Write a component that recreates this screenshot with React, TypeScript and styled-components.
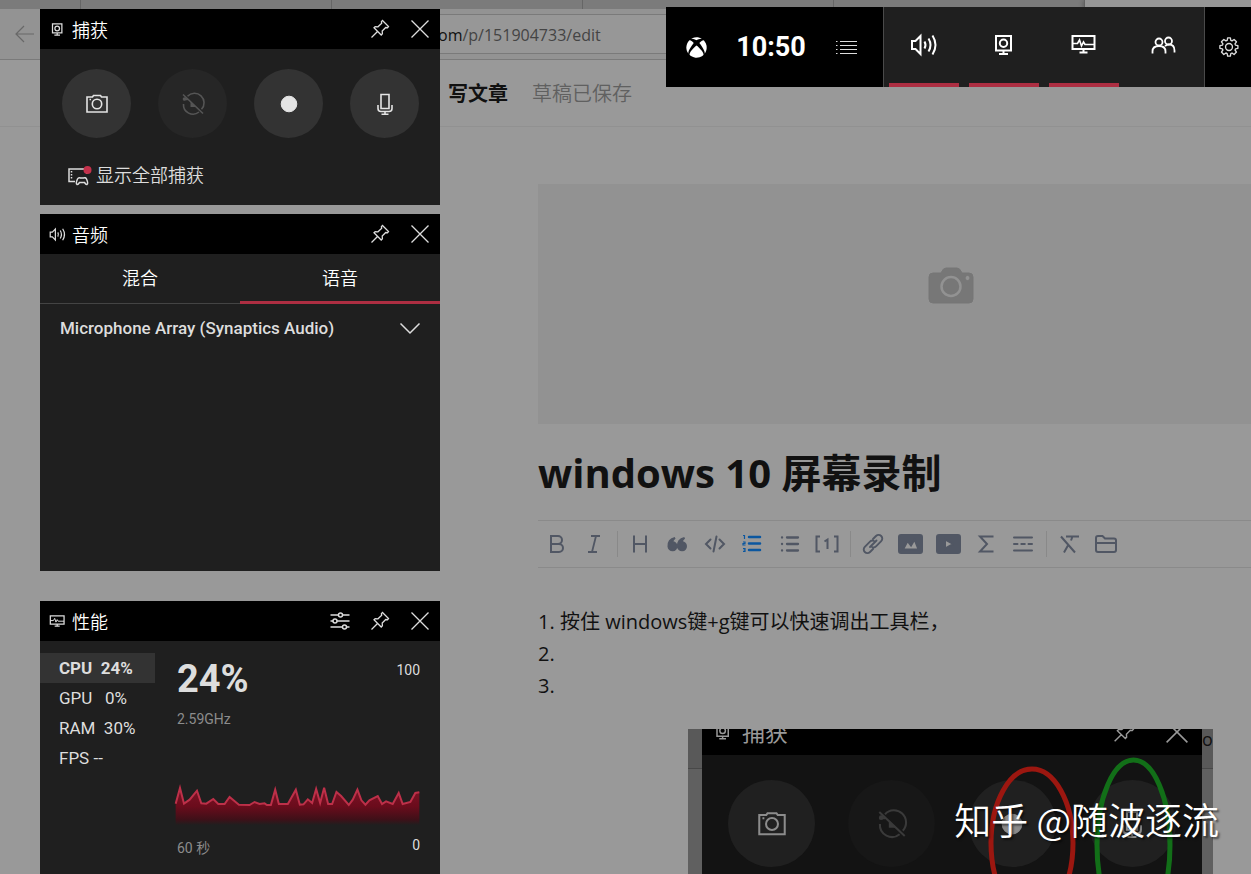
import React from "react";
import styled, { createGlobalStyle, css } from "styled-components";
import { FaXbox } from "react-icons/fa";

const GlobalStyle = createGlobalStyle`
  *, *::before, *::after { box-sizing: border-box; }
  body {
    margin: 0;
    background: #999;
    font-family: "Open Sans", "Noto Sans CJK SC", sans-serif;
  }
  button, input, select {
    margin: 0;
    padding: 0;
    border: 0;
    background: none;
    color: inherit;
    font: inherit;
  }
`;

const din = css`
  font-family: Roboto, "Noto Sans CJK SC", sans-serif;
`;

/* ---------- icons ---------- */

const Svg = styled.svg`
  display: block;
  flex: none;
  fill: none;
  stroke: currentColor;
  overflow: visible;
`;

type IconProps = { size?: number };

const CaptureIcon = ({ size = 24 }: IconProps) => (
  <Svg width={size} height={size} viewBox="0 0 24 24" strokeWidth="2">
    <path d="M4 3h15v14.500H4zM11.500 17.500v3M7 21h9" />
    <circle cx="11.500" cy="10.300" r="3.700" />
  </Svg>
);

const SpeakerIcon = ({ size = 28 }: IconProps) => (
  <Svg width={size} height={size} viewBox="0 0 28 28" strokeWidth="2">
    <path d="M2 10h3.500L10.500 5v18L5.500 18H2z" />
    <path d="M14.500 10.500q2 3.500 0 7M18.500 7.500q4 6.500 0 13M22.500 4.500q6 9.500 0 19" />
  </Svg>
);

const MonitorIcon = ({ size = 24 }: IconProps) => (
  <Svg width={size} height={size} viewBox="0 0 24 24" strokeWidth="2">
    <path d="M.5 3h22v13H.5zM11.500 16v3.500M7.500 19.500h8" />
    <path d="M.5 10.500h5l2-3.500 2 6 2-4 1.500 2.500h9.500" strokeWidth="1.600" />
  </Svg>
);

const PeopleIcon = () => (
  <Svg width="24" height="24" viewBox="0 0 24 24" strokeWidth="1.800">
    <circle cx="7" cy="9" r="3.500" />
    <circle cx="16.500" cy="8" r="3.500" />
    <path d="M.5 20.500v-2Q.5 13 7 13t6.500 5.500v2M13 13q2-1.500 4-1.500 5.500 0 5.500 6v2" />
  </Svg>
);

const MenuIcon = () => (
  <Svg width="22" height="16" viewBox="0 0 22 16" strokeWidth="1.200">
    <path d="M5 2.500h17M5 6.500h17M5 10.500h17M5 14.500h17" />
    <path d="M1 2.500h1.500M1 6.500h1.500M1 10.500h1.500M1 14.500h1.500" />
  </Svg>
);

const GearIcon = () => (
  <Svg width="20" height="20" viewBox="0 0 22 22" strokeWidth="1.500" strokeLinejoin="round">
    <circle cx="11" cy="11" r="3.800" />
    <path d="M9.500 1h3l.5 2.700 1.300.6 2.300-1.600 2.600 2.600-1.600 2.300.6 1.400 2.600.5v3l-2.600.5-.6 1.300 1.600 2.300-2.600 2.600-2.300-1.600-1.300.6-.5 2.800h-3L9 18.200l-1.400-.6-2.300 1.600-2.600-2.600 1.600-2.300-.6-1.300-2.700-.5v-3L3.700 9l.6-1.400-1.600-2.300 2.600-2.600 2.300 1.600L9 3.700z" />
  </Svg>
);

const PinIcon = ({ size = 20 }: IconProps) => (
  <Svg width={size} height={size} viewBox="0 0 20 20" strokeWidth="1.300">
    <path d="M12.500 1.500l6 6-1 1.200-1.800-.2-3.500 3.500.2 2.800-1.200 1.200L4 8.800l1.200-1.200 2.800.2 3.700-3.500-.3-1.700zM7.500 12.500L1.500 18.500" />
  </Svg>
);

const CloseIcon = ({ size = 18 }: IconProps) => (
  <Svg width={size} height={size} viewBox="0 0 18 18" strokeWidth="1.300">
    <path d="M.5.5l17 17M17.500.5l-17 17" />
  </Svg>
);

const SlidersIcon = () => (
  <Svg width="20" height="18" viewBox="0 0 20 18" strokeWidth="1.500">
    <path d="M.5 3h8M12.500 3h7M.5 9h2.500M7 9h12.500M.5 15h12M16.500 15h3" />
    <circle cx="10.500" cy="3" r="2" />
    <circle cx="5" cy="9" r="2" />
    <circle cx="14.500" cy="15" r="2" />
  </Svg>
);

const CameraIcon = ({ size = 22 }: IconProps) => (
  <Svg width={size} height={size} viewBox="0 0 22 22" strokeWidth="1.600">
    <path d="M1 4h5.500l1-1.500h7l1 1.500H21v15H1z" />
    <circle cx="11" cy="11" r="4.700" />
    <path d="M3.500 6.500h1.500" />
  </Svg>
);

const RewindOffIcon = ({ size = 22 }: IconProps) => (
  <Svg width={size} height={size} viewBox="0 0 22 22" strokeWidth="1.600">
    <path d="M5.500 3.300a9.500 9.500 0 0 1 14 13M17 19A9.500 9.500 0 0 1 1.500 11M1 1.500l20 19M1 6.500h4.500" />
    <path d="M8.500 9v5h5.500z" fill="currentColor" stroke="none" />
    <circle cx="2.500" cy="6" r="1.800" fill="currentColor" stroke="none" />
  </Svg>
);

const RecordIcon = ({ size = 16 }: IconProps) => (
  <Svg width={size} height={size} viewBox="0 0 16 16" stroke="none">
    <circle cx="8" cy="8" r="7.800" fill="currentColor" />
  </Svg>
);

const MicIcon = ({ size = 22 }: IconProps) => (
  <Svg width={size} height={size} viewBox="0 0 22 22" strokeWidth="1.600">
    <path d="M7 1.500h8v14H7zM4 12v3.500q0 3 3 3h8q3 0 3-3V12M11 18.500v2.500M7.500 21.200h7" />
  </Svg>
);

const GalleryIcon = () => (
  <Svg width="24" height="20" viewBox="0 0 24 20" strokeWidth="1.500">
    <path d="M7 15.500H1V3h18v5" />
    <path d="M3.500 5v9" strokeDasharray="1.500 1.500" />
    <path d="M9 18.500q-1.500-1 .5-5.500 1-2 3-1h3q2-1 3 1 2 4.500.5 5.500-1 .5-2.500-2h-5q-1.500 2.500-2.500 2z" />
    <circle cx="19.500" cy="4" r="4" fill="#c4314b" stroke="none" />
  </Svg>
);

/* ---------- browser page ---------- */

const Desktop = styled.div`
  position: relative;
  height: 100vh;
  overflow: hidden;
  background: #999;
`;

const TabStrip = styled.div`
  display: flex;
  height: 9px;
  background: #7b7b7b;
`;

const Tab = styled.div<{ $first?: boolean; $active?: boolean }>`
  flex: ${(p) => (p.$active ? "1 0 0" : "none")};
  width: ${(p) => (p.$first ? 81 : 251)}px;
  border-right: 1px solid #666;
  ${(p) => p.$active && "background: #969696; border: 0; box-shadow: -2px 0 4px #606060;"}
`;

const AddressRow = styled.div`
  display: flex;
  align-items: center;
  gap: 20px;
  height: 51px;
  padding-left: 14px;
  background: #939393;
  border-bottom: 1px solid #7a7a7a;
`;

const BackButton = styled.button`
  color: #686868;
`;

const AddressBox = styled.label`
  display: flex;
  flex: 1;
  align-items: center;
  height: 40px;
  padding: 2px 0 0 383px;
  border: 1px solid #7a7a7a;
  background: #979797;
  color: #111;
  font-size: 16px;
`;

const AddressInput = styled.input`
  flex: 1;
  min-width: 0;
  color: #444;
`;

const SiteHeader = styled.header`
  display: flex;
  align-items: center;
  gap: 24px;
  height: 67px;
  padding: 0 0 2px 448px;
  border-bottom: 1px solid #919191;
  font-size: 20px;
`;

const SiteTitle = styled.strong`
  color: #111;
`;

const SavedNote = styled.span`
  color: #606060;
  font-weight: 350;
`;

const Article = styled.main`
  width: 825px;
  margin: 57px 0 0 538px;
`;

const Cover = styled.button`
  display: grid;
  place-items: center;
  width: 100%;
  height: 240px;
  padding-bottom: 36px;
  background: #929292;
  color: #777;
`;

const Title = styled.h1`
  margin: 0;
  padding: 19px 0 17px;
  color: #111;
  font-size: 40px;
  line-height: 60px;
`;

const EditorBar = styled.div`
  display: flex;
  align-items: center;
  height: 48px;
  border: solid #8a8a8a;
  border-width: 1px 0;
  color: #515764;
`;

const ToolGroup = styled.div<{ $width: number }>`
  display: flex;
  width: ${(p) => p.$width}px;
`;

const Tool = styled.button<{ $active?: boolean }>`
  display: grid;
  flex: 1;
  place-items: center;
  height: 46px;
  color: ${(p) => (p.$active ? "#0b57a0" : "inherit")};
`;

const ToolDivider = styled.span`
  width: 8px;
  height: 26px;
  background: linear-gradient(#898989, #898989) center / 1px 100% no-repeat;
`;

const Steps = styled.ol`
  margin: 38px 0 27px;
  padding-left: 22px;
  color: #111;
  font-size: 20px;
  line-height: 32px;
`;

const Figure = styled.figure`
  display: flex;
  width: 525px;
  height: 240px;
  margin: 0 auto;
  overflow: hidden;
  background: #606060;
`;

const FigureMargin = styled.div<{ $width: number }>`
  width: ${(p) => p.$width}px;
  height: 40px;
  overflow: hidden;
  border-bottom: 1px solid #484848;
  background: #595959;
  color: #111;
  font-size: 18px;
  line-height: 20px;
`;

const FigurePanel = styled.div`
  position: relative;
  flex: 1;
  background: #131313;
  color: #999;
`;

const FigureHeader = styled.div`
  display: flex;
  align-items: center;
  gap: 10px;
  height: 50px;
  margin-top: -24px;
  padding: 4px 14px 0 12px;
  background: #000;
  font-size: 23px;
  line-height: 30px;
`;

const FigureActions = styled.span`
  display: flex;
  gap: 31px;
  margin-left: auto;
`;

const FigureRow = styled.div`
  display: flex;
  justify-content: space-between;
  padding: 25px 26px;
`;

const FigureDisc = styled.span<{ $dim?: boolean }>`
  display: grid;
  place-items: center;
  width: 87px;
  height: 87px;
  border-radius: 50%;
  background: ${(p) => (p.$dim ? "#171717" : "#202020")};
  color: ${(p) => (p.$dim ? "#3a3a3a" : "#8c8c8c")};
`;

const Scribble = styled(Svg)`
  position: absolute;
  top: 0;
  left: 0;
`;

const Watermark = styled.div`
  position: absolute;
  right: 32px;
  bottom: 27px;
  color: #fff;
  font-family: "Noto Sans CJK SC", sans-serif;
  font-size: 37px;
  font-weight: 350;
  line-height: 56px;
  text-shadow: 2px 2px 2px rgba(0, 0, 0, 0.5);
`;

/* ---------- game bar ---------- */

const GameBar = styled.nav`
  ${din}
  position: absolute;
  top: 7px;
  right: 0;
  display: flex;
  height: 80px;
  background: #000;
  color: #fff;
`;

const BarStatus = styled.div`
  display: flex;
  align-items: center;
  justify-content: space-between;
  width: 217px;
  padding: 0 26px 0 20px;
`;

const Clock = styled.time`
  font-size: 27px;
  font-weight: 700;
`;

const PlainButton = styled.button`
  display: grid;
  place-items: center;
  color: #ddd;
`;

const BarGroup = styled.div`
  display: flex;
  border-left: 1px solid #4a4a4a;
  background: #1f1f1f;
`;

const BarButton = styled.button<{ $on?: boolean }>`
  display: grid;
  place-items: center;
  width: 80px;
  padding-bottom: 4px;
  background: ${(p) =>
    p.$on ? "linear-gradient(#ad2e42, #ad2e42) center bottom / 70px 4px no-repeat" : "none"};
`;

const SettingsButton = styled(PlainButton)`
  width: 47px;
  padding-left: 2px;
  border-left: 1px solid #4a4a4a;
`;

/* ---------- widgets ---------- */

const Widgets = styled.aside`
  ${din}
  position: absolute;
  top: 9px;
  left: 40px;
  width: 400px;
  color: #ddd;
`;

const Widget = styled.section<{ $height: number; $gap: number }>`
  min-height: ${(p) => p.$height}px;
  margin-bottom: ${(p) => p.$gap}px;
  background: #1f1f1f;
`;

const WidgetHeader = styled.header`
  display: flex;
  align-items: center;
  height: 40px;
  padding-left: 8px;
  background: #000;
`;

const WidgetIcon = styled.span`
  display: grid;
  place-items: center;
  width: 18px;
  margin-right: 6px;
`;

const WidgetTitle = styled.h2`
  flex: 1;
  margin: 0;
  color: #fff;
  font-size: 18px;
  font-weight: 350;
`;

const HeaderButton = styled(PlainButton)`
  width: 40px;
  height: 40px;
`;

const CaptureRow = styled.div`
  display: flex;
  gap: 27px;
  padding: 20px 21px 21px 22px;
`;

const RoundButton = styled.button`
  display: grid;
  place-items: center;
  width: 69px;
  height: 69px;
  border-radius: 50%;
  background: #333;
  color: #e4e4e4;
  &:disabled {
    background: #262626;
    color: #555;
  }
`;

const ShowAll = styled.a`
  display: flex;
  align-items: center;
  gap: 4px;
  margin-left: 28px;
  color: #ddd;
  font-size: 18px;
  font-weight: 350;
  line-height: 34px;
  text-decoration: none;
`;

const Tabs = styled.div`
  display: flex;
  height: 50px;
`;

const TabButton = styled.button<{ $selected?: boolean }>`
  flex: 1;
  padding-bottom: ${(p) => (p.$selected ? 2 : 4)}px;
  border-bottom: ${(p) => (p.$selected ? "3px solid #ad2e42" : "1px solid #444")};
  color: #fff;
  font-size: 18px;
  font-weight: 350;
`;

const DeviceField = styled.label`
  display: grid;
  grid-template-columns: 1fr auto;
  align-items: center;
  height: 48px;
  padding: 0 20px;
`;

const DeviceSelect = styled.select`
  grid-area: 1 / 1 / 2 / 3;
  width: 100%;
  height: 32px;
  appearance: none;
  color: #ddd;
  font-size: 17px;
  font-weight: 500;
`;

const ChevronCell = styled.span`
  grid-area: 1 / 2;
  pointer-events: none;
`;

const PerfBody = styled.div`
  display: flex;
  padding: 12px 20px 0 0;
`;

const MetricList = styled.div`
  display: flex;
  flex-direction: column;
  width: 115px;
  margin-right: 20px;
`;

const Metric = styled.button<{ $selected?: boolean }>`
  height: 30px;
  padding-left: 19px;
  background: ${(p) => (p.$selected ? "#333" : "none")};
  font-size: 17px;
  font-weight: ${(p) => (p.$selected ? 700 : 400)};
  text-align: left;
  white-space: pre;
`;

const Graph = styled.div`
  flex: 1;
  font-size: 14px;
  line-height: 20px;
`;

const GraphRow = styled.div`
  display: flex;
  justify-content: space-between;
  padding-left: 2px;
`;

const BigValue = styled.strong`
  font-size: 38px;
  line-height: 52px;
`;

const Limit = styled.span`
  padding-top: 7px;
`;

const Muted = styled.div`
  padding: 4px 2px 54px;
  color: #8c8c8c;
`;

const Seconds = styled.span`
  padding-top: 3px;
  color: #8c8c8c;
`;

const Chart = styled(Svg)`
  width: 100%;
  height: 42px;
  margin-bottom: 10px;
`;

const load =
  "438,732 451,685 463,732 480,720 502,693 515,731 530,732 551,718 566,733 585,733 600,712 628,735 660,736 675,727 690,733 705,731 712,736 724,736 737,690 748,733 775,733 799,690 811,735 822,734 835,719 848,730 860,688 872,730 884,684 896,733 908,733 921,697 935,709 958,736 970,720 984,690 996,722 1008,735 1020,722 1045,709 1058,733 1070,725 1090,733 1108,700 1120,733 1143,727 1158,700 1170,698";

const HeaderButtons = () => (
  <>
    <HeaderButton aria-label="固定"><PinIcon /></HeaderButton>
    <HeaderButton aria-label="关闭"><CloseIcon /></HeaderButton>
  </>
);

const tool = { width: 24, height: 24, viewBox: "0 0 24 24", strokeWidth: 2 };

const EditorTools = () => (
  <EditorBar role="toolbar">
    <ToolGroup $width={75}>
      <Tool aria-label="粗体">
        <Svg {...tool}><path d="M6 4h7a4 4 0 0 1 0 8H6zM6 12h8a4 4 0 0 1 0 8H6z" /></Svg>
      </Tool>
      <Tool aria-label="斜体">
        <Svg {...tool} strokeWidth="1.800"><path d="M9 4h9M6 20h9M14 4l-4 16" /></Svg>
      </Tool>
    </ToolGroup>
    <ToolDivider />
    <ToolGroup $width={225}>
      <Tool aria-label="标题">
        <Svg {...tool}><path d="M6 3.500v17M18 3.500v17M6 12h12" /></Svg>
      </Tool>
      <Tool aria-label="引用">
        <Svg {...tool} stroke="none">
          <path
            fill="currentColor"
            d="M10 6Q7.500 7.500 7.300 10.300A4 4 0 1 1 3.500 14.500Q3 7.500 10 6zM19.500 6Q17 7.500 16.800 10.300A4 4 0 1 1 13 14.500Q12.500 7.500 19.500 6z"
          />
        </Svg>
      </Tool>
      <Tool aria-label="代码块">
        <Svg {...tool} strokeLinecap="round"><path d="M7.500 7.500L3 12l4.500 4.500M16.500 7.500L21 12l-4.500 4.500M13.500 4.500l-3 15" /></Svg>
      </Tool>
      <Tool $active aria-label="有序列表">
        <Svg {...tool}>
          <path d="M9 5h11M9 11.500h11M9 18h11" strokeWidth="2.500" strokeLinecap="round" />
          <path d="M3 3.500h1.500V7M3 10h2v1.500H3V13h2.500M3 16.500h2V18H3.500M5 18v1.500H3" strokeWidth="1.200" />
        </Svg>
      </Tool>
      <Tool aria-label="无序列表">
        <Svg {...tool} strokeLinecap="round">
          <path d="M9 5.500h11M9 12h11M9 18.500h11M4 5.500h.1M4 12h.1M4 18.500h.1" strokeWidth="2.300" />
        </Svg>
      </Tool>
      <Tool aria-label="脚注">
        <Svg {...tool}><path d="M5 4.500H1.500v15H5M19 4.500h3.500v15H19M9.500 9.500l3-2V17" /></Svg>
      </Tool>
    </ToolGroup>
    <ToolDivider />
    <ToolGroup $width={188}>
      <Tool aria-label="链接">
        <Svg {...tool} strokeLinecap="round" strokeWidth="1.900">
          <path d="M9 15l6.500-6.500M12 7l3-3a3.600 3.600 0 0 1 5.200 5.200l-5.200 5.200a3.500 3.500 0 0 1-4 .6M12 17l-3 3a3.600 3.600 0 0 1-5.200-5.200L9 9.600a3.500 3.500 0 0 1 4-.6" />
        </Svg>
      </Tool>
      <Tool aria-label="图片">
        <Svg {...tool} stroke="none">
          <rect x="1" y="3" width="23" height="18" rx="2" fill="currentColor" />
          <path d="M5 17.500l4.500-8.500 3.500 4.500 3.500-6 4 10z" fill="#999" />
        </Svg>
      </Tool>
      <Tool aria-label="视频">
        <Svg {...tool} stroke="none">
          <rect x="1" y="3" width="23" height="18" rx="2" fill="currentColor" />
          <path d="M9 7.500l8 4.500-8 4.500z" fill="#999" />
        </Svg>
      </Tool>
      <Tool aria-label="公式">
        <Svg {...tool}><path d="M19.500 4.500H6l7 7.500-7 7.500h13.500" /></Svg>
      </Tool>
      <Tool aria-label="分割线">
        <Svg {...tool} strokeLinecap="round">
          <path d="M3 5.500h18M3 18.500h18M3 12h3.500M10.300 12h3.500M17.500 12H21" />
        </Svg>
      </Tool>
    </ToolGroup>
    <ToolDivider />
    <ToolGroup $width={75}>
      <Tool aria-label="清除格式">
        <Svg {...tool}><path d="M9 4.500h13M15.500 4.500l-1.500 4M11.500 12.500L7 20.500M4 4.500l14 16" /></Svg>
      </Tool>
      <Tool aria-label="草稿箱">
        <Svg {...tool}>
          <path d="M2 6q0-2 2-2h4.500l2.500 2.500h9q2 0 2 2V18q0 2-2 2H4q-2 0-2-2zM2 11h20" />
        </Svg>
      </Tool>
    </ToolGroup>
  </EditorBar>
);

export default function App() {
  return (
    <>
      <GlobalStyle />
      <Desktop>
        <TabStrip>
          <Tab $first />
          <Tab />
          <Tab />
          <Tab />
          <Tab />
          <Tab $active />
        </TabStrip>
        <AddressRow>
          <BackButton aria-label="后退">
            <Svg width="20" height="18" viewBox="0 0 20 18" strokeWidth="1.200">
              <path d="M20 9H2M10 1L2 9l8 8" />
            </Svg>
          </BackButton>
          <AddressBox>
            om
            <AddressInput defaultValue="/p/151904733/edit" />
          </AddressBox>
        </AddressRow>
        <SiteHeader>
          <SiteTitle>写文章</SiteTitle>
          <SavedNote>草稿已保存</SavedNote>
        </SiteHeader>

        <Article>
          <Cover aria-label="添加题图">
            <Svg width="44" height="36" viewBox="0 0 44 36" stroke="none">
              <path
                fill="currentColor"
                d="M4 5h8q2-5 5-5h11q3 0 5 5h7q4 0 4 4v22q0 4-4 4H4q-4 0-4-4V9q0-4 4-4z"
              />
              <circle cx="22" cy="18.500" r="9.500" fill="none" stroke="#929292" strokeWidth="2.500" />
              <circle cx="38.500" cy="10" r="2.500" fill="#929292" />
            </Svg>
          </Cover>
          <Title>windows 10 屏幕录制</Title>
          <EditorTools />
          <Steps>
            <li>按住 windows键+g键可以快速调出工具栏，</li>
            <li />
            <li />
          </Steps>
          <Figure>
            <FigureMargin $width={14} />
            <FigurePanel>
              <FigureHeader>
                <CaptureIcon size={18} />
                捕获
                <FigureActions>
                  <PinIcon size={22} />
                  <CloseIcon size={22} />
                </FigureActions>
              </FigureHeader>
              <FigureRow>
                <FigureDisc><CameraIcon size={28} /></FigureDisc>
                <FigureDisc $dim><RewindOffIcon size={28} /></FigureDisc>
                <FigureDisc><RecordIcon size={20} /></FigureDisc>
                <FigureDisc><MicIcon size={28} /></FigureDisc>
              </FigureRow>
              <Scribble width="500" height="240" viewBox="0 0 500 240" strokeWidth="5">
                <ellipse cx="330" cy="114" rx="41" ry="74" stroke="#9c1710" />
                <ellipse cx="431.500" cy="116" rx="36.500" ry="85" stroke="#126f18" />
              </Scribble>
            </FigurePanel>
            <FigureMargin $width={11}>or</FigureMargin>
          </Figure>
        </Article>

        <Watermark>知乎 @随波逐流</Watermark>

        <Widgets>
          <Widget $height={196} $gap={9}>
            <WidgetHeader>
              <WidgetIcon><CaptureIcon size={15} /></WidgetIcon>
              <WidgetTitle>捕获</WidgetTitle>
              <HeaderButtons />
            </WidgetHeader>
            <CaptureRow>
              <RoundButton aria-label="屏幕截图"><CameraIcon /></RoundButton>
              <RoundButton aria-label="录制刚才的内容" disabled><RewindOffIcon /></RoundButton>
              <RoundButton aria-label="开始录制"><RecordIcon /></RoundButton>
              <RoundButton aria-label="麦克风"><MicIcon /></RoundButton>
            </CaptureRow>
            <ShowAll href="#captures"><GalleryIcon />显示全部捕获</ShowAll>
          </Widget>

          <Widget $height={357} $gap={30}>
            <WidgetHeader>
              <WidgetIcon><SpeakerIcon size={17} /></WidgetIcon>
              <WidgetTitle>音频</WidgetTitle>
              <HeaderButtons />
            </WidgetHeader>
            <Tabs role="tablist">
              <TabButton role="tab">混合</TabButton>
              <TabButton role="tab" $selected aria-selected>语音</TabButton>
            </Tabs>
            <DeviceField>
              <DeviceSelect aria-label="麦克风设备">
                <option>Microphone Array (Synaptics Audio)</option>
              </DeviceSelect>
              <ChevronCell>
                <Svg width="20" height="12" viewBox="0 0 20 12" strokeWidth="1.500">
                  <path d="M.5 1.500l9.500 9.500 9.500-9.500" />
                </Svg>
              </ChevronCell>
            </DeviceField>
          </Widget>

          <Widget $height={280} $gap={0}>
            <WidgetHeader>
              <WidgetIcon><MonitorIcon size={15} /></WidgetIcon>
              <WidgetTitle>性能</WidgetTitle>
              <HeaderButton aria-label="选项"><SlidersIcon /></HeaderButton>
              <HeaderButtons />
            </WidgetHeader>
            <PerfBody>
              <MetricList>
                <Metric $selected>{"CPU  24%"}</Metric>
                <Metric>{"GPU   0%"}</Metric>
                <Metric>{"RAM  30%"}</Metric>
                <Metric>{"FPS --"}</Metric>
              </MetricList>
              <Graph>
                <GraphRow>
                  <BigValue>24%</BigValue>
                  <Limit>100</Limit>
                </GraphRow>
                <Muted>2.59GHz</Muted>
                <Chart viewBox="436 670 736 126" preserveAspectRatio="none">
                  <defs>
                    <linearGradient id="load" x1="0" y1="0" x2="0" y2="1">
                      <stop offset="0" stopColor="#7d1426" />
                      <stop offset="0.500" stopColor="#6b0c1c" />
                      <stop offset="0.850" stopColor="#3f1018" />
                      <stop offset="1" stopColor="#1f1f1f" />
                    </linearGradient>
                  </defs>
                  <polygon points={`438,796 ${load} 1170,796`} fill="url(#load)" stroke="none" />
                  <polyline points={load} stroke="#bd3049" strokeWidth="6" />
                </Chart>
                <GraphRow>
                  <Seconds>60 秒</Seconds>
                  <span>0</span>
                </GraphRow>
              </Graph>
            </PerfBody>
          </Widget>
        </Widgets>

        <GameBar>
          <BarStatus>
            <FaXbox size={21} />
            <Clock>10:50</Clock>
            <PlainButton aria-label="小组件菜单"><MenuIcon /></PlainButton>
          </BarStatus>
          <BarGroup>
            <BarButton $on aria-label="音频"><SpeakerIcon /></BarButton>
            <BarButton $on aria-label="捕获"><CaptureIcon /></BarButton>
            <BarButton $on aria-label="性能"><MonitorIcon /></BarButton>
            <BarButton aria-label="社交"><PeopleIcon /></BarButton>
          </BarGroup>
          <SettingsButton aria-label="设置"><GearIcon /></SettingsButton>
        </GameBar>
      </Desktop>
    </>
  );
}
